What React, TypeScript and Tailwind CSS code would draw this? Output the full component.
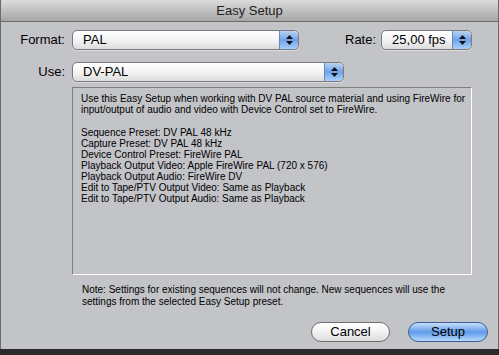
import React from "react";

const font = { fontFamily: '"Lucida Grande", "Liberation Sans", Arial, sans-serif' };

function Stepper() {
  return (
    <div className="flex h-full w-[19px] flex-col items-center justify-center gap-[2px] rounded-r-[5px] border-l border-[#6e84b8] bg-gradient-to-b from-[#b9d3f3] via-[#6fa2e6] to-[#a9d0fb]">
      <svg width="7" height="4" viewBox="0 0 7 4">
        <path d="M3.5 0 L7 4 L0 4 Z" fill="#111" />
      </svg>
      <svg width="7" height="4" viewBox="0 0 7 4">
        <path d="M0 0 L7 0 L3.5 4 Z" fill="#111" />
      </svg>
    </div>
  );
}

function PopUp({ value, width }: { value: string; width: string }) {
  return (
    <div
      className={`flex h-[20px] ${width} items-stretch overflow-hidden rounded-[5px] border border-[#7b7b7b] bg-gradient-to-b from-[#ffffff] via-[#f4f4f4] to-[#dcdcdc] shadow-[0_1px_0_rgba(255,255,255,0.4)]`}
    >
      <span className="flex-1 whitespace-nowrap pl-[10px] text-[13px] leading-[18px] text-black">{value}</span>
      <Stepper />
    </div>
  );
}

export default function App() {
  return (
    <div className="flex h-[355px] w-[499px] flex-col bg-[#2b2b2b]" style={font}>
      <div className="flex h-[349px] flex-col border-x border-[#6a6a6a] bg-[#c3c4c8]">
        <div className="flex h-[22px] items-center justify-center border-b border-[#6b6b6b] bg-gradient-to-b from-[#dcdcdc] to-[#a6a6a6] text-[13px] text-[#222]">
          Easy Setup
        </div>

        <div className="mt-[8px] flex items-center">
          <span className="w-[64px] text-right text-[13px] text-black">Format:</span>
          <div className="ml-[7px]">
            <PopUp value="PAL" width="w-[227px]" />
          </div>
          <span className="ml-[46px] text-[13px] text-black">Rate:</span>
          <div className="ml-[5px]">
            <PopUp value="25,00 fps" width="w-[91px]" />
          </div>
        </div>

        <div className="mt-[12px] flex items-center">
          <span className="w-[64px] text-right text-[13px] text-black">Use:</span>
          <div className="ml-[7px]">
            <PopUp value="DV-PAL" width="w-[272px]" />
          </div>
        </div>

        <div className="ml-[71px] mt-[5px] h-[188px] w-[400px] border border-b-white border-l-[#7e7e7e] border-r-white border-t-[#7e7e7e] px-[8px] pt-[5px] text-[10px] leading-[11px] text-black">
          <p className="whitespace-nowrap">
            Use this Easy Setup when working with DV PAL source material and using FireWire for
            <br />
            input/output of audio and video with Device Control set to FireWire.
          </p>
          <div className="mt-[12px]">
            <p>Sequence Preset: DV PAL 48 kHz</p>
            <p>Capture Preset: DV PAL 48 kHz</p>
            <p>Device Control Preset: FireWire PAL</p>
            <p>Playback Output Video: Apple FireWire PAL (720 x 576)</p>
            <p>Playback Output Audio: FireWire DV</p>
            <p>Edit to Tape/PTV Output Video: Same as Playback</p>
            <p>Edit to Tape/PTV Output Audio: Same as Playback</p>
          </div>
        </div>

        <p className="ml-[81px] mt-[9px] whitespace-nowrap text-[10px] leading-[12px] text-black">
          Note: Settings for existing sequences will not change. New sequences will use the
          <br />
          settings from the selected Easy Setup preset.
        </p>

        <div className="mt-[14px] flex justify-end gap-[18px] pr-[10px]">
          <button className="h-[20px] w-[79px] rounded-full border border-[#6e6e6e] bg-gradient-to-b from-[#ffffff] via-[#f2f2f2] to-[#dcdcdc] text-[13px] leading-[18px] text-black">
            Cancel
          </button>
          <button className="h-[20px] w-[80px] rounded-full border border-[#3f5e98] bg-gradient-to-b from-[#c9e0fb] via-[#5f9ae8] to-[#b4dafd] text-[13px] leading-[18px] text-black">
            Setup
          </button>
        </div>
      </div>
    </div>
  );
}
